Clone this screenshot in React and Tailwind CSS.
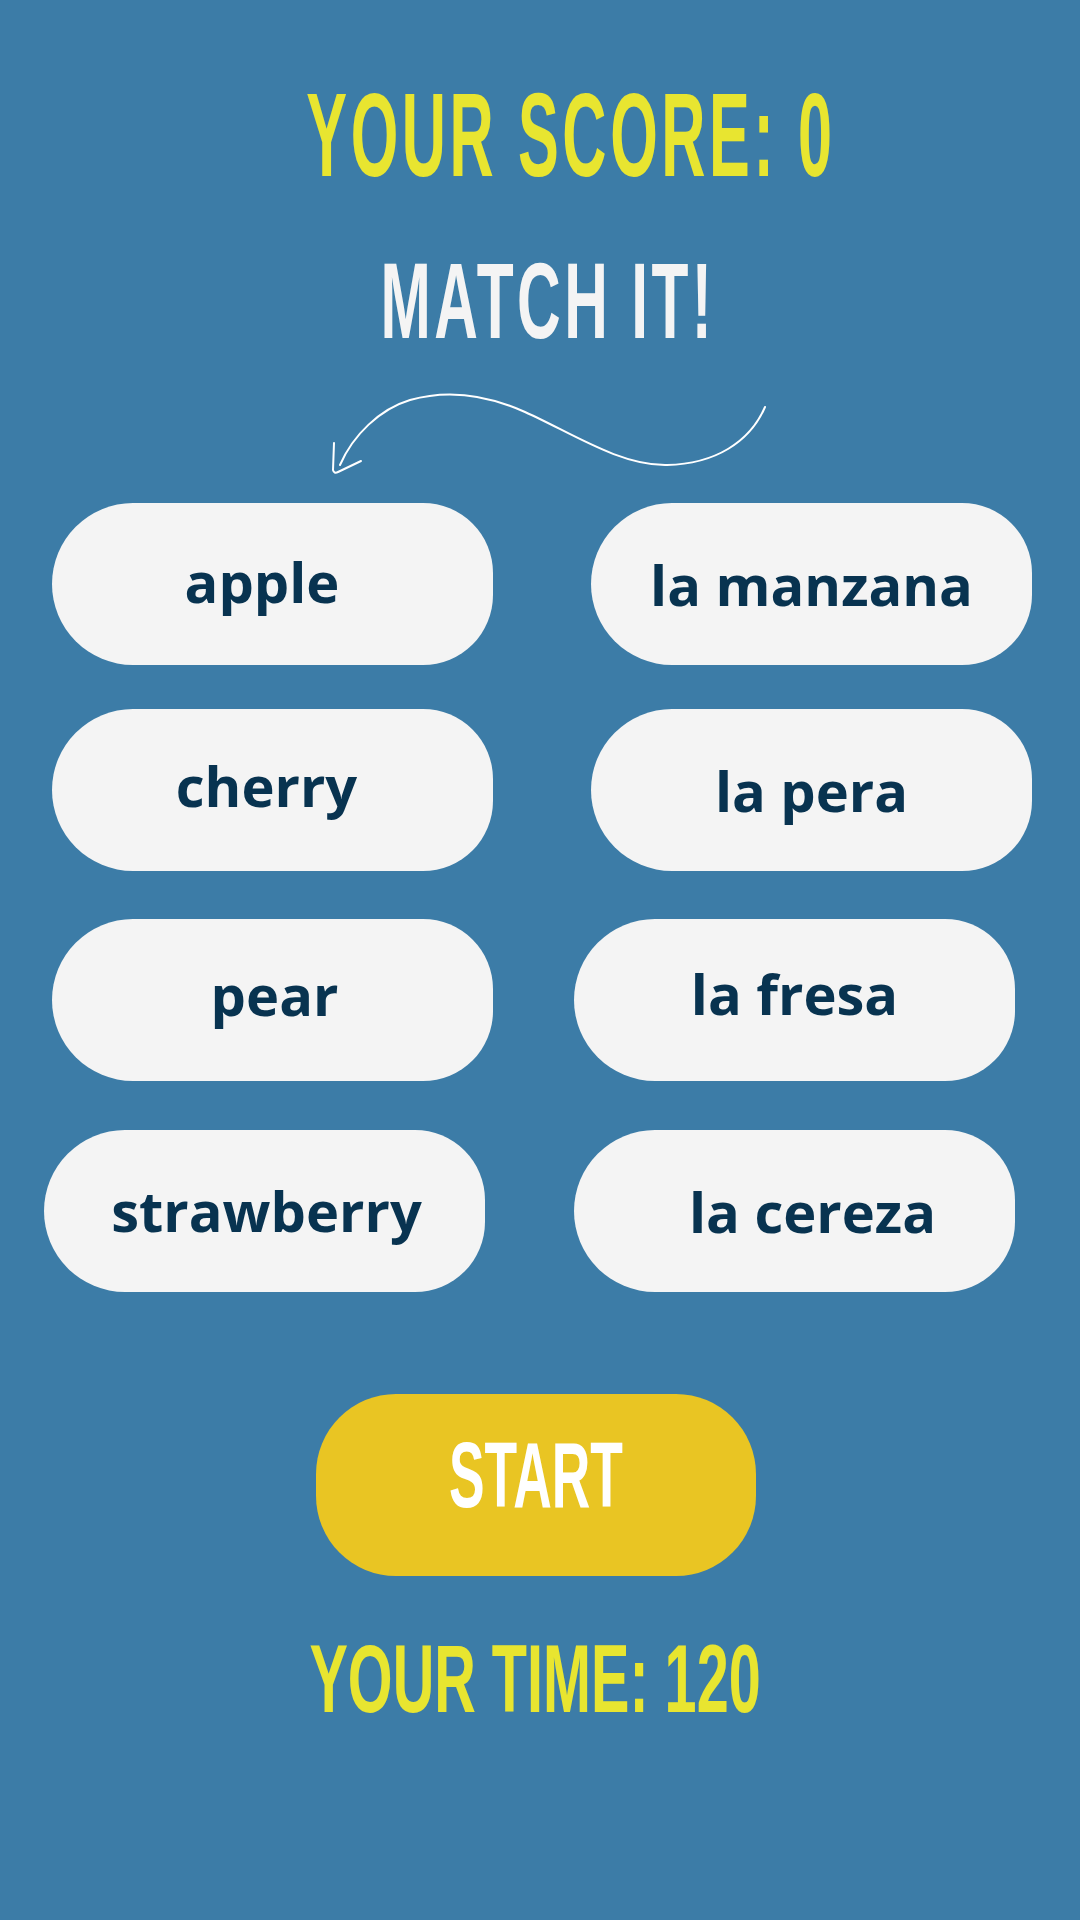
import React from 'react';

const rows = [
  {
    cls: 'mt-[25px] pl-[52px] gap-[98px]',
    items: [
      { label: 'apple', cls: 'pr-[21px] pb-[6px]' },
      { label: 'la manzana', cls: 'pb-[0px]' },
    ],
  },
  {
    cls: 'mt-[44px] pl-[52px] gap-[98px]',
    items: [
      { label: 'cherry', cls: 'pr-[12px] pb-[11px]' },
      { label: 'la pera', cls: 'pb-[0px]' },
    ],
  },
  {
    cls: 'mt-[48px] pl-[52px] gap-[81px]',
    items: [
      { label: 'pear', cls: 'pl-[4px] pb-[13px]' },
      { label: 'la fresa', cls: 'pb-[15px]' },
    ],
  },
  {
    cls: 'mt-[49px] pl-[44px] gap-[89px]',
    items: [
      { label: 'strawberry', cls: 'pl-[4px] pb-[3px]' },
      { label: 'la cereza', cls: 'pl-[36px] pb-[1px]' },
    ],
  },
];

function Pill({ label, cls }) {
  return (
    <button
      className={`flex h-[162px] w-[441px] items-center justify-center rounded-l-[81px] rounded-r-[70px] bg-[#f4f4f4] font-['Open_Sans',sans-serif] text-[56px] font-bold text-[#083350] ${cls}`}
    >
      {label}
    </button>
  );
}

function Arrow() {
  return (
    <svg width="450" height="88" viewBox="0 0 450 88" fill="none" stroke="#ffffff" strokeWidth="2" strokeLinecap="round" strokeLinejoin="round">
      <path d="M440 17 C425 52 390 74 342 75 C295 76 245 42 200 22 C160 4 120 0 85 10 C55 19 28 45 15 75" />
      <path d="M9 53 L8 80 Q9 84 13 82 L36 71" />
    </svg>
  );
}

export default function App() {
  const display = "font-['Liberation_Sans',Arial,sans-serif] font-bold leading-none inline-block origin-center whitespace-nowrap";

  return (
    <div className="min-h-[1920px] w-[1080px] bg-[#3c7ca7] pb-10">
      <div className="flex justify-center pl-[61px] pt-[75px]">
        <h1 className={`${display} scale-x-[0.514] tracking-[7px] text-[119px] text-[#e8e530]`}>YOUR SCORE: 0</h1>
      </div>

      <div className="mt-[53px] flex justify-center pl-[15px]">
        <h2 className={`${display} scale-x-[0.56] tracking-[6px] text-[108px] text-[#f4f4f4]`}>MATCH IT!</h2>
      </div>

      <div className="mt-[35px] pl-[325px]">
        <Arrow />
      </div>

      {rows.map((row, i) => (
        <div key={i} className={`flex ${row.cls}`}>
          {row.items.map((item) => (
            <Pill key={item.label} label={item.label} cls={item.cls} />
          ))}
        </div>
      ))}

      <div className="mt-[102px] pl-[316px]">
        <button className="flex h-[182px] w-[440px] items-center justify-center rounded-[80px] bg-[#e9c523] pb-5">
          <span className={`${display} scale-x-[0.58] text-[92px] text-white`}>START</span>
        </button>
      </div>

      <div className="mt-[55px] flex justify-center pr-[9px]">
        <p className={`${display} scale-x-[0.6] text-[96px] text-[#e8e530]`}>YOUR TIME: 120</p>
      </div>
    </div>
  );
}
